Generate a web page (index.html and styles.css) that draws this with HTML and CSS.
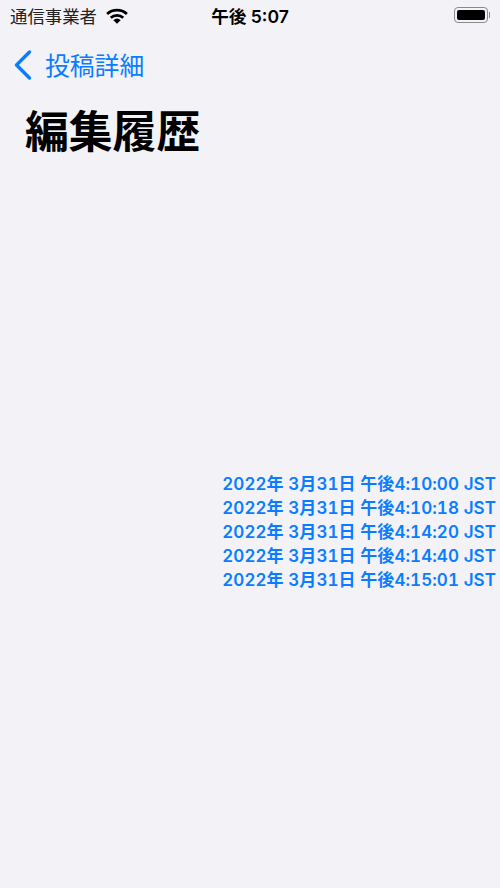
FILE: index.html
```html
<!DOCTYPE html>
<html lang="ja">
<head>
    <meta charset="UTF-8">
    <title>編集履歴</title>
    <link rel="stylesheet" href="styles.css">
</head>
<body>
    <div class="status-bar">
        <div class="status-left">
            <span class="carrier">通信事業者</span>
            <svg class="wifi" width="22" height="16" viewBox="0 0 24 17">
                <path d="M1.2 6.4 A16 16 0 0 1 22.8 6.4" fill="none" stroke="#000" stroke-width="3"/>
                <path d="M5.2 10.4 A10 10 0 0 1 18.8 10.4" fill="none" stroke="#000" stroke-width="3"/>
                <path d="M8 13 A6 6 0 0 1 16 13 L12 17 Z" fill="#000"/>
            </svg>
        </div>
        <div class="clock">午後 5:07</div>
        <div class="status-right">
            <div class="battery"><div class="battery-fill"></div></div>
            <div class="battery-cap"></div>
        </div>
    </div>

    <div class="nav-bar">
        <svg class="back-icon" width="20" height="32" viewBox="0 0 20 32">
            <path d="M16.5 3 L3.5 16 L16.5 29" fill="none" stroke="#0a7cff" stroke-width="3.4" stroke-linecap="round" stroke-linejoin="round"/>
        </svg>
        <span class="back-label">投稿詳細</span>
    </div>

    <h1>編集履歴</h1>

    <div class="history">
        <div class="history-row">2022年 3月31日 午後4:10:00 JST</div>
        <div class="history-row">2022年 3月31日 午後4:10:18 JST</div>
        <div class="history-row">2022年 3月31日 午後4:14:20 JST</div>
        <div class="history-row">2022年 3月31日 午後4:14:40 JST</div>
        <div class="history-row">2022年 3月31日 午後4:15:01 JST</div>
    </div>
</body>
</html>
```

FILE: styles.css
```css
body {
    margin: 0;
    height: 888px;
    overflow: hidden;
    background: #f2f2f7;
    color: #000;
    font-family: Inter, "Noto Sans CJK JP", sans-serif;
}

.status-bar {
    height: 30px;
    display: grid;
    grid-template-columns: 1fr auto 1fr;
    align-items: center;
    padding: 0 10px 2px 10px;
}

.status-left {
    display: flex;
    align-items: center;
    gap: 9px;
}

.carrier {
    font-size: 17.4px;
    color: #222;
}

.wifi {
    margin-top: 2px;
}

.clock {
    font-size: 17.6px;
    font-weight: 600;
}

.status-right {
    display: flex;
    justify-content: flex-end;
    align-items: center;
    gap: 1px;
}

.battery {
    box-sizing: border-box;
    width: 34px;
    height: 16px;
    padding: 2px;
    border: 1px solid #8a8a8e;
    border-radius: 4px;
}

.battery-fill {
    height: 100%;
    background: #000;
    border-radius: 2px;
}

.battery-cap {
    width: 1px;
    height: 6px;
    background: #8a8a8e;
}

.nav-bar {
    height: 65px;
    display: flex;
    align-items: center;
    gap: 12px;
    padding-left: 13px;
}

.back-label {
    padding-bottom: 2px;
    font-size: 24.8px;
    color: #0a7cff;
}

h1 {
    margin: 4px 0 0 25px;
    font-size: 43.8px;
    line-height: 64px;
    font-weight: 700;
}

.history {
    margin-top: 307px;
    padding-right: 4px;
    text-align: right;
    color: #0a7cff;
    font-size: 17px;
    font-weight: 600;
    line-height: 24px;
    letter-spacing: 0.07px;
    font-variant-numeric: tabular-nums;
}
```
